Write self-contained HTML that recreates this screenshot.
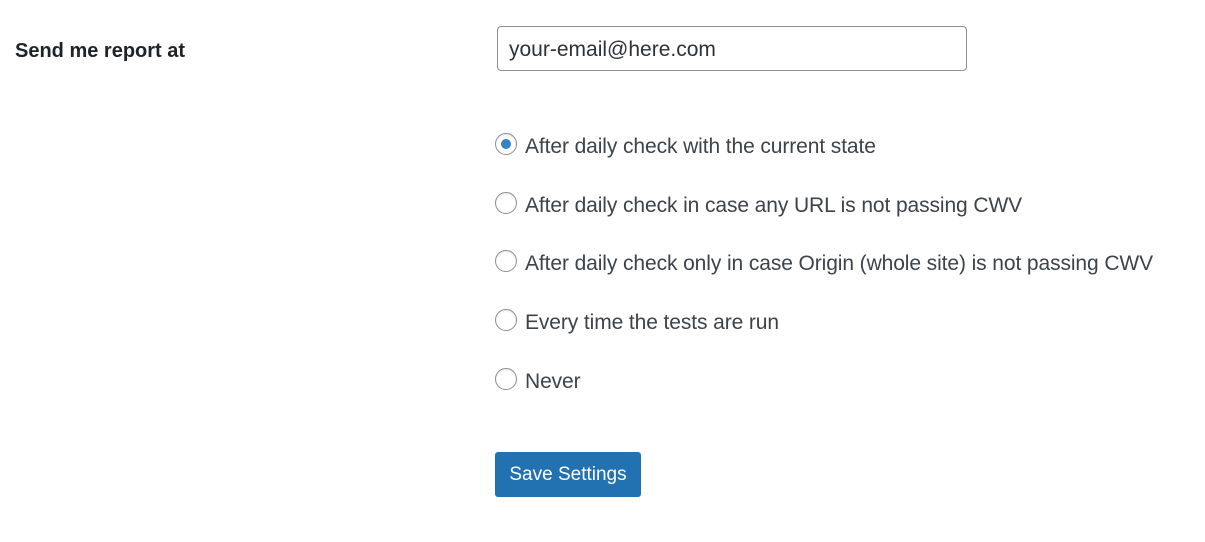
<!DOCTYPE html>
<html><head><style>
body{margin:0;width:1205px;height:542px;background:#fff;font-family:"Liberation Sans",sans-serif;color:#3c434a;position:relative;overflow:hidden}
.lbl{position:absolute;left:15px;top:40px;font-size:20px;font-weight:bold;color:#1d2327}
.inp{position:absolute;left:497px;top:26px;width:468px;height:43px;border:1px solid #8c8f94;border-radius:4px;box-sizing:content-box}
.inp span{position:absolute;left:11px;top:11px;font-size:21px;color:#2c3338}
.r{position:absolute;left:495px;height:24px;display:flex;align-items:center;font-size:21px;white-space:nowrap;letter-spacing:-0.1px}
.c{width:20px;height:20px;border:1px solid #8c8f94;border-radius:50%;margin-right:8px;position:relative;flex:none;box-shadow:inset 0 1px 2px rgba(0,0,0,.1)}
.c.on::after{content:"";position:absolute;left:5px;top:5px;width:10px;height:10px;border-radius:50%;background:#3582c4}
.btn{position:absolute;left:495px;top:452px;width:146px;height:45px;background:#2271b1;border-radius:3px;color:#fff;font-size:19px;text-align:center;line-height:46px}
</style></head><body>
<div class="lbl">Send me report at</div>
<div class="inp"><span>your-email@here.com</span></div>
<div class="r" style="top:134px"><div class="c on" style="top:-2px"></div><span style="position:relative;top:1px">After daily check with the current state</span></div>
<div class="r" style="top:193px"><div class="c" style="top:-2px"></div><span style="position:relative;top:1px">After daily check in case any URL is not passing CWV</span></div>
<div class="r" style="top:251px"><div class="c" style="top:-2px"></div><span style="position:relative;top:1px">After daily check only in case Origin (whole site) is not passing CWV</span></div>
<div class="r" style="top:310px"><div class="c" style="top:-2px"></div><span style="position:relative;top:1px">Every time the tests are run</span></div>
<div class="r" style="top:369px"><div class="c" style="top:-2px"></div><span style="position:relative;top:1px">Never</span></div>
<div class="btn">Save Settings</div>
</body></html>
